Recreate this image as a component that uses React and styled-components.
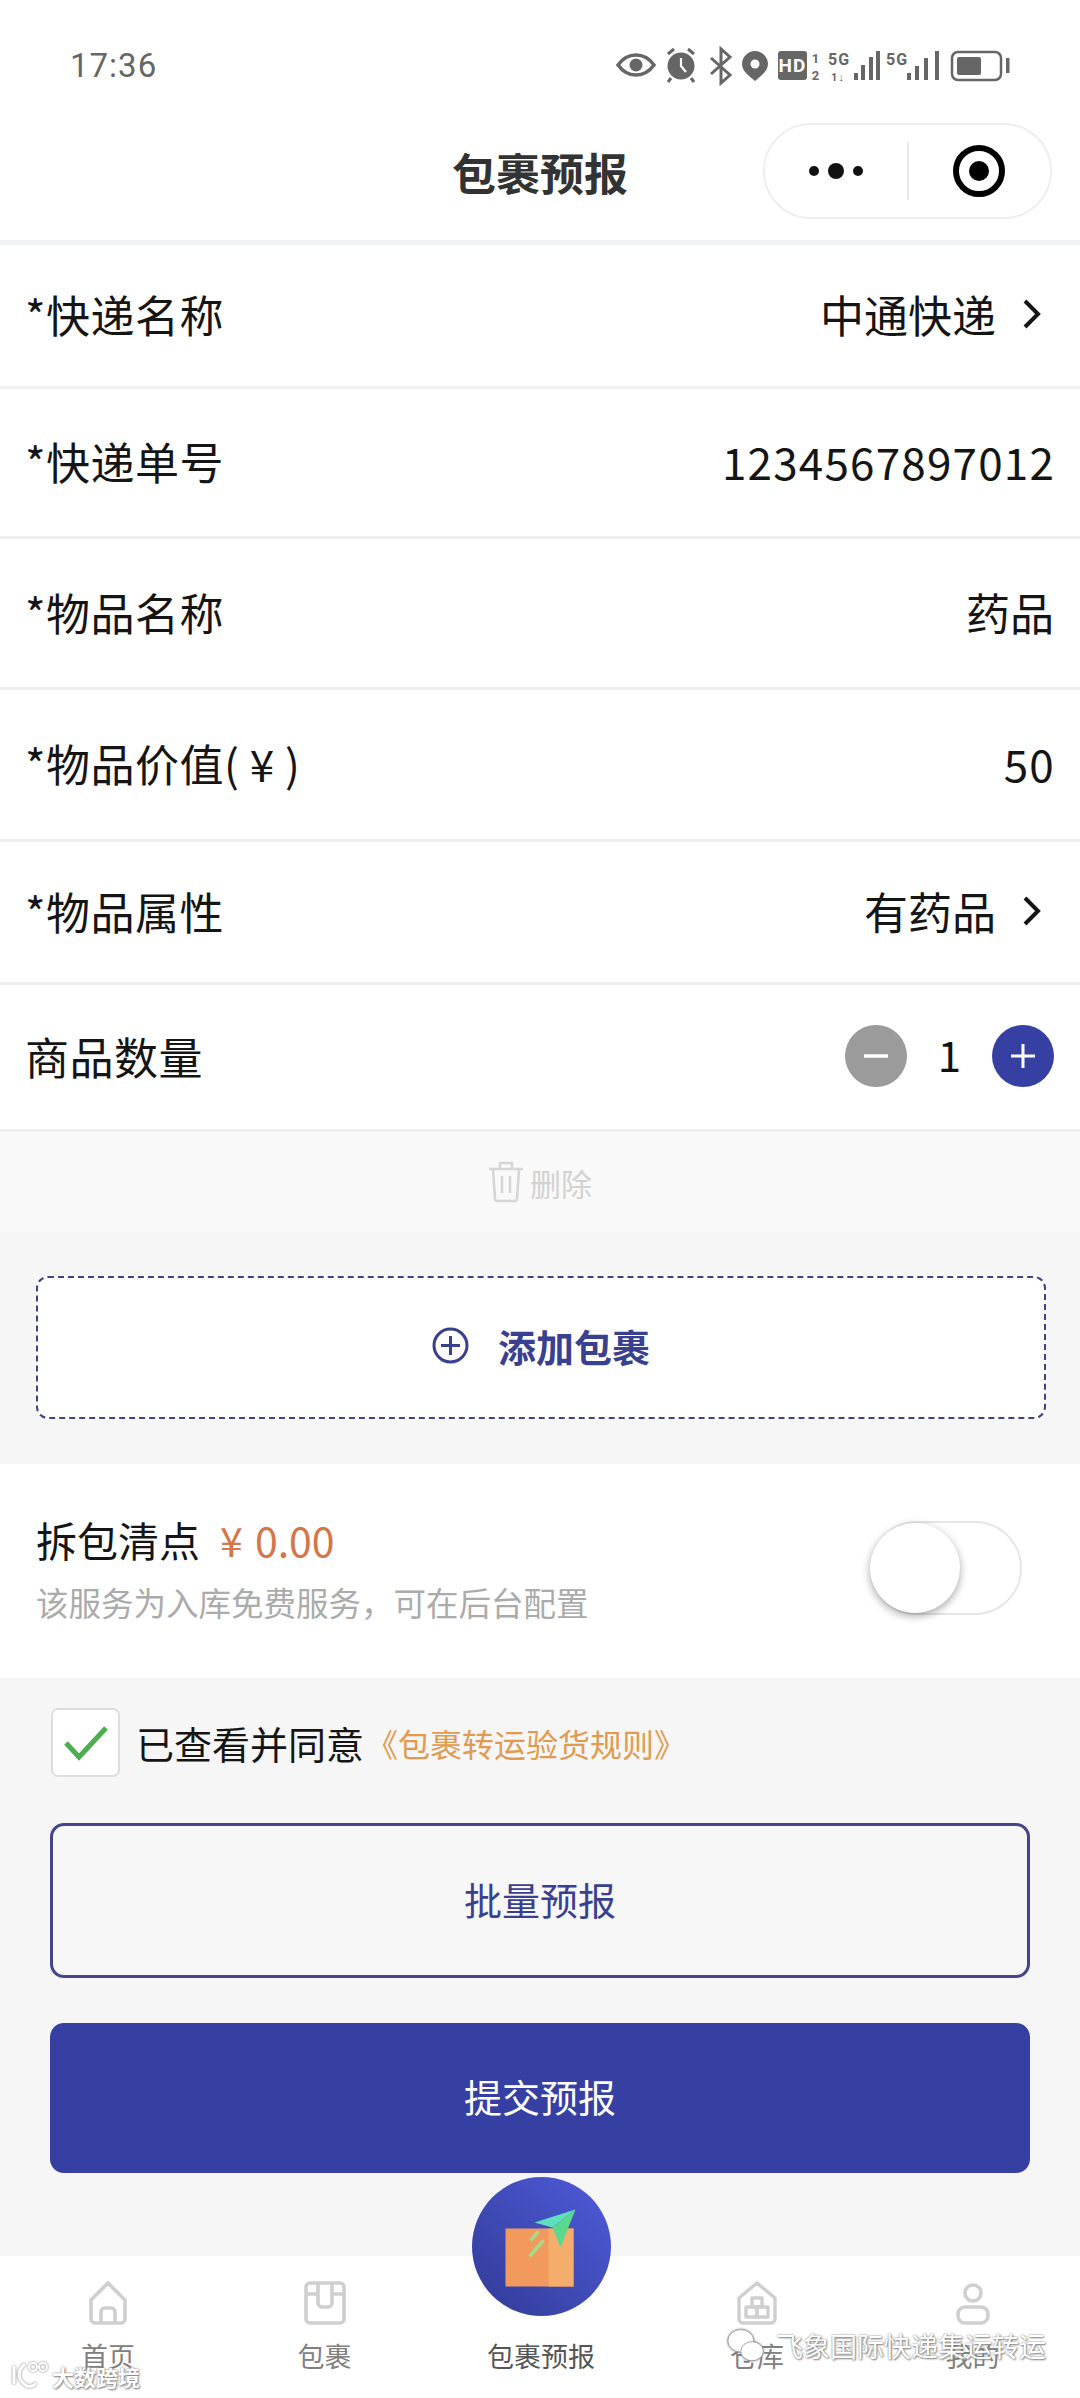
import React from 'react';
import styled, { createGlobalStyle } from 'styled-components';

const GlobalStyle = createGlobalStyle`
  html, body {
    margin: 0;
    padding: 0;
    background: #f6f6f7;
  }
  * {
    box-sizing: border-box;
  }
`;

const FONT = '"Noto Sans CJK SC", "Noto Sans", sans-serif';
const BLUE = '#3640a3';

const Page = styled.div`
  position: relative;
  width: 1080px;
  height: 2398px;
  overflow: hidden;
  background: #f6f6f7;
  font-family: ${FONT};
  color: #111;
`;

const Header = styled.header`
  height: 240px;
  background: #fff;
`;

const StatusBar = styled.div`
  height: 110px;
  padding: 20px 69px 0 70px;
  display: flex;
  justify-content: space-between;
  align-items: center;
  color: #666;
  font-family: Roboto, sans-serif;
  font-size: 33px;
  letter-spacing: 1px;

  svg {
    display: block;
    margin-top: 2px;
  }
`;

const NavBar = styled.div`
  height: 130px;
  display: flex;
  align-items: center;
  justify-content: flex-end;
  position: relative;
  padding: 0 28px 8px 0;
`;

const Title = styled.h1`
  position: absolute;
  left: 0;
  right: 0;
  top: 0;
  margin: 0;
  text-align: center;
  font-size: 44px;
  line-height: 124px;
  font-weight: 700;
  color: #333;
`;

const Capsule = styled.div`
  width: 289px;
  height: 96px;
  border: 2px solid #eeeeee;
  border-radius: 48px;
  display: flex;
  align-items: center;
  background: #fff;
`;

const CapsuleSide = styled.div`
  flex: 1;
  height: 58px;
  display: flex;
  align-items: center;
  justify-content: center;
  border-left: ${props => (props.$divided ? '2px solid #e8e8e8' : 'none')};
`;

const HeaderRule = styled.div`
  height: 5px;
  background: #f1f1f8;
`;

const Row = styled.div`
  height: ${props => props.$height}px;
  padding: 0 26px 3px 25px;
  display: flex;
  align-items: center;
  justify-content: space-between;
  background: #fff;
  border-bottom: 3px solid #efefef;
  font-size: 44px;
`;

const Label = styled.span`
  color: #151515;
  letter-spacing: 0.5px;
`;

const Value = styled.span`
  display: flex;
  align-items: center;
  gap: 26px;
  font-size: 44px;
  color: #151515;
  letter-spacing: ${props => (props.$digits ? '1.2px' : '0')};
  margin-right: ${props => (props.$digits ? '-1px' : '0')};
`;

const Chevron = styled.svg`
  margin-right: 12px;
`;

const Stepper = styled.div`
  display: flex;
  align-items: center;
`;

const StepButton = styled.div`
  width: 62px;
  height: 62px;
  border-radius: 50%;
  background: ${props => props.$color};
  display: flex;
  align-items: center;
  justify-content: center;
`;

const StepCount = styled.span`
  width: 85px;
  text-align: center;
  font-size: 42px;
  margin-top: -4px;
`;

const DeleteBar = styled.div`
  height: 100px;
  background: #f9f9f9;
  display: flex;
  align-items: center;
  justify-content: center;
  gap: 6px;
  font-size: 31px;
  color: #d2d2d2;
`;

const AddSection = styled.div`
  height: 232px;
  padding: 44px 34px 0 36px;
`;

const AddButton = styled.div`
  height: 143px;
  padding-bottom: 4px;
  background: #fff;
  border: 2px dashed #3d4384;
  border-radius: 12px;
  display: flex;
  align-items: center;
  justify-content: center;
  gap: 29px;
  font-size: 38px;
  font-weight: 700;
  color: #3a4090;
`;

const ServiceCard = styled.div`
  height: 214px;
  padding: 0 58px 0 36px;
  background: #fff;
  display: flex;
  align-items: center;
  justify-content: space-between;
`;

const ServiceText = styled.div`
  display: flex;
  flex-direction: column;
  gap: 10px;
  margin-top: -5px;
`;

const ServiceTitle = styled.div`
  display: flex;
  align-items: baseline;
  gap: 20px;
  font-size: 41px;
  line-height: 56px;
  color: #151515;
`;

const Price = styled.span`
  color: #d4754a;
  font-size: 41px;
  word-spacing: 3px;
`;

const ServiceHint = styled.div`
  font-size: 32.5px;
  line-height: 50px;
  color: #ababab;
`;

const Toggle = styled.div`
  position: relative;
  width: 152px;
  height: 94px;
  margin-top: -6px;
  border: 2px solid #e6e6e6;
  border-radius: 47px;
  background: #fff;
`;

const Knob = styled.div`
  position: absolute;
  left: -2px;
  top: 0;
  width: 90px;
  height: 90px;
  border-radius: 50%;
  background: #fff;
  box-shadow: 0 3px 8px rgba(0, 0, 0, 0.35);
`;

const ActionSection = styled.div`
  height: 578px;
  padding: 30px 50px 0;
`;

const AgreeRow = styled.div`
  display: flex;
  align-items: center;
  height: 69px;
  font-size: 38px;
  color: #151515;
  margin-bottom: 46px;
  padding-left: 1px;
`;

const CheckBox = styled.div`
  width: 69px;
  height: 69px;
  margin-right: 16px;
  border: 2px solid #dedede;
  border-radius: 7px;
  background: #fff;
  display: flex;
  align-items: center;
  justify-content: center;
`;

const RuleLink = styled.span`
  margin-left: 2px;
  font-size: 32px;
  color: #e19b50;
`;

const ActionButton = styled.div`
  height: ${props => props.$height}px;
  margin-bottom: 45px;
  padding-bottom: 5px;
  border: 3px solid ${props => (props.$filled ? BLUE : '#43468a')};
  border-radius: 14px;
  background: ${props => (props.$filled ? BLUE : '#f7f7f8')};
  color: ${props => (props.$filled ? '#fff' : '#3a4090')};
  display: flex;
  align-items: center;
  justify-content: center;
  font-size: 38px;
`;

const TabBar = styled.nav`
  height: 142px;
  background: #fff;
  display: grid;
  grid-template-columns: 216px 217px 216px 216px 215px;
`;

const Tab = styled.div`
  display: flex;
  flex-direction: column;
  align-items: center;
  justify-content: flex-end;
  height: 120px;
  font-size: 27px;
  line-height: 40px;
  color: ${props => (props.$active ? '#555' : '#808080')};
`;

const TabIcon = styled.div`
  height: 44px;
  margin-bottom: 11px;
  display: flex;
  align-items: flex-end;
`;

const CenterBadge = styled.div`
  position: absolute;
  left: 472px;
  top: 2177px;
  width: 139px;
  height: 139px;
  border-radius: 50%;
  background: linear-gradient(45deg, #343e9c 10%, #4a57d0 85%);
  display: flex;
  align-items: center;
  justify-content: center;
`;

const Watermark = styled.div`
  position: absolute;
  display: flex;
  align-items: center;
  color: #fff;
  text-shadow: 0 0 2px #777, 1px 1px 2px #888;

  svg {
    filter: drop-shadow(0 0 1px #777);
  }
`;

const LeftMark = styled(Watermark)`
  left: 10px;
  top: 2360px;
  gap: 2px;
  font-size: 22px;
  font-weight: 700;
`;

const RightMark = styled(Watermark)`
  left: 726px;
  top: 2326px;
  gap: 10px;
  font-size: 27px;
`;

const StatusIcons = () => (
  <svg width="400" height="40" viewBox="612 46 400 40">
    <g fill="#666" stroke="none" fontFamily="Roboto, sans-serif" fontWeight="700" textAnchor="middle">
      <path d="M619 65c5-7 10-10 18-10s13 3 18 10c-5 7-10 10-18 10s-13-3-18-10z" fill="none" stroke="#666" strokeWidth="3.5" />
      <circle cx="637" cy="65" r="6.5" />
      <circle cx="682" cy="66" r="13.5" />
      <path d="M669 54l6-5M695 54l-6-5M672 78l-3 4M692 78l3 4" stroke="#666" strokeWidth="3" />
      <path d="M682 58v8l5 6" stroke="#fff" strokeWidth="2.2" fill="none" />
      <path d="M712 58l19 17-9 8V49l9 8-19 17" fill="none" stroke="#666" strokeWidth="3" />
      <path d="M756 51c7 0 13 6 13 13 0 7-7 12-13 17-6-5-13-10-13-17 0-7 6-13 13-13z" />
      <circle cx="756" cy="64" r="4.5" fill="#fff" />
      <rect x="779" y="51" width="29" height="29" rx="3" />
      <text x="793.5" y="72" fill="#fff" fontSize="19">HD</text>
      <text x="817" y="63" fontSize="13">1</text>
      <text x="817" y="80" fontSize="13">2</text>
      <text x="840" y="65" fontSize="16">5G</text>
      <text x="839" y="81" fontSize="11">1↓</text>
      <rect x="855" y="73" width="4" height="7" />
      <rect x="862" y="65" width="4" height="15" />
      <rect x="870" y="57" width="4" height="23" />
      <rect x="877" y="51" width="4" height="29" />
      <text x="898" y="65" fontSize="16">5G</text>
      <rect x="908" y="73" width="4" height="7" />
      <rect x="916" y="66" width="4" height="14" />
      <rect x="925" y="58" width="4" height="22" />
      <rect x="936" y="51" width="4" height="29" />
      <rect x="953" y="52" width="49" height="28" rx="6" fill="none" stroke="#666" strokeWidth="2.5" />
      <rect x="958" y="57" width="24" height="18" rx="2" />
      <rect x="1007" y="58" width="3.5" height="15" />
    </g>
  </svg>
);

const ChevronIcon = () => (
  <Chevron width="20" height="32" viewBox="0 0 20 32">
    <path d="M3 3l13 13L3 29" fill="none" stroke="#151515" strokeWidth="4" />
  </Chevron>
);

const TrashIcon = () => (
  <svg width="36" height="42" viewBox="0 0 36 42" fill="none" stroke="#d6d6d6" strokeWidth="2.6">
    <path d="M1 8h34M12 8V2h12v6M5 8l2 30a2.5 2.5 0 0 0 2.5 2h17a2.5 2.5 0 0 0 2.5-2l2-30M14 15v17M22 15v17" />
  </svg>
);

const HomeIcon = () => (
  <svg width="38" height="44" viewBox="0 0 38 44" fill="none" stroke="#cfcfcf" strokeWidth="3.6" strokeLinejoin="round">
    <path d="M2 19L19 2l17 17v19a4 4 0 0 1-4 4H6a4 4 0 0 1-4-4z" />
    <path d="M12 42V31a4 4 0 0 1 4-4h6a4 4 0 0 1 4 4v11" />
  </svg>
);

const ParcelIcon = () => (
  <svg width="42" height="44" viewBox="0 0 42 44" fill="none" stroke="#cfcfcf" strokeWidth="3.6" strokeLinejoin="round">
    <rect x="2" y="2" width="38" height="40" rx="4" />
    <path d="M2 13h12M28 13h12M14 2v20a4 4 0 0 0 4 4h6a4 4 0 0 0 4-4V2" />
  </svg>
);

const WarehouseIcon = () => (
  <svg width="40" height="44" viewBox="0 0 40 44" fill="none" stroke="#cfcfcf" strokeWidth="3.4" strokeLinejoin="round">
    <path d="M2 17L20 2l18 15v21a4 4 0 0 1-4 4H6a4 4 0 0 1-4-4z" />
    <rect x="15" y="17" width="10" height="9" />
    <rect x="9" y="26" width="11" height="10" />
    <rect x="20" y="26" width="11" height="10" />
  </svg>
);

const PersonIcon = () => (
  <svg width="34" height="42" viewBox="0 0 34 42" fill="none" stroke="#cfcfcf" strokeWidth="3.6">
    <circle cx="17" cy="10" r="8" />
    <path d="M9 24h16a7 7 0 0 1 7 7v2a7 7 0 0 1-7 7H9a7 7 0 0 1-7-7v-2a7 7 0 0 1 7-7z" />
  </svg>
);

const PackagePlaneIcon = () => (
  <svg width="90" height="90" viewBox="0 0 90 90">
    <rect x="8.5" y="26.5" width="68" height="58" fill="#f29a5e" />
    <rect x="51.5" y="26.5" width="25" height="58" fill="#f5ad6c" />
    <path d="M33.5 38.5l8-9M32.5 54.5l14-16" stroke="#a8d988" strokeWidth="3.5" />
    <path d="M78.5 7.5L37.5 20.5l18 5z" fill="#5fe0bc" />
    <path d="M78.5 7.5L55.5 25.5l8 20z" fill="#5ad88f" />
  </svg>
);

const formRows = [
  { label: '*快递名称', value: '中通快递', arrow: true, height: 144 },
  { label: '*快递单号', value: '1234567897012', digits: true, height: 150 },
  { label: '*物品名称', value: '药品', height: 151 },
  { label: '*物品价值( ¥ )', value: '50', digits: true, height: 152 },
  { label: '*物品属性', value: '有药品', arrow: true, height: 143 },
];

const tabs = [
  { label: '首页', icon: <HomeIcon /> },
  { label: '包裹', icon: <ParcelIcon /> },
  { label: '包裹预报', active: true },
  { label: '仓库', icon: <WarehouseIcon /> },
  { label: '我的', icon: <PersonIcon /> },
];

export default function App() {
  return (
    <Page>
      <GlobalStyle />
      <Header>
        <StatusBar>
          <span>17:36</span>
          <StatusIcons />
        </StatusBar>
        <NavBar>
          <Title>包裹预报</Title>
          <Capsule>
            <CapsuleSide>
              <svg width="58" height="20" viewBox="0 0 58 20" fill="#111">
                <circle cx="7" cy="10" r="5" />
                <circle cx="29" cy="10" r="8" />
                <circle cx="51" cy="10" r="5" />
              </svg>
            </CapsuleSide>
            <CapsuleSide $divided>
              <svg width="54" height="54" viewBox="0 0 54 54">
                <circle cx="27" cy="27" r="23" fill="none" stroke="#000" strokeWidth="6" />
                <circle cx="27" cy="27" r="10" fill="#000" />
              </svg>
            </CapsuleSide>
          </Capsule>
        </NavBar>
      </Header>
      <HeaderRule />

      {formRows.map(row => (
        <Row key={row.label} $height={row.height}>
          <Label>{row.label}</Label>
          <Value $digits={row.digits}>
            {row.value}
            {row.arrow && <ChevronIcon />}
          </Value>
        </Row>
      ))}
      <Row $height={147}>
        <Label>商品数量</Label>
        <Stepper>
          <StepButton $color="#9b9b9b">
            <svg width="28" height="28" viewBox="0 0 28 28">
              <path d="M2 14h24" stroke="#fff" strokeWidth="3.5" />
            </svg>
          </StepButton>
          <StepCount>1</StepCount>
          <StepButton $color={BLUE}>
            <svg width="28" height="28" viewBox="0 0 28 28">
              <path d="M2 14h24M14 2v24" stroke="#fff" strokeWidth="3" />
            </svg>
          </StepButton>
        </Stepper>
      </Row>

      <DeleteBar>
        <TrashIcon />
        <span>删除</span>
      </DeleteBar>

      <AddSection>
        <AddButton>
          <svg width="37" height="37" viewBox="0 0 37 37" fill="none" stroke="#3a4090" strokeWidth="3">
            <circle cx="18.5" cy="18.5" r="16.5" />
            <path d="M9 18.5h19M18.5 9v19" />
          </svg>
          <span>添加包裹</span>
        </AddButton>
      </AddSection>

      <ServiceCard>
        <ServiceText>
          <ServiceTitle>
            <span>拆包清点</span>
            <Price>¥ 0.00</Price>
          </ServiceTitle>
          <ServiceHint>{'该服务为入库免费服务\uFF0C可在后台配置'}</ServiceHint>
        </ServiceText>
        <Toggle>
          <Knob />
        </Toggle>
      </ServiceCard>

      <ActionSection>
        <AgreeRow>
          <CheckBox>
            <svg width="46" height="36" viewBox="0 0 46 36" fill="none">
              <path d="M3 18l13 14L43 3" stroke="#4cae4f" strokeWidth="5" />
            </svg>
          </CheckBox>
          <span>已查看并同意</span>
          <RuleLink>《包裹转运验货规则》</RuleLink>
        </AgreeRow>
        <ActionButton $height={155}>批量预报</ActionButton>
        <ActionButton $height={150} $filled>提交预报</ActionButton>
      </ActionSection>

      <TabBar>
        {tabs.map(tab => (
          <Tab key={tab.label} $active={tab.active}>
            {tab.icon && <TabIcon>{tab.icon}</TabIcon>}
            <span>{tab.label}</span>
          </Tab>
        ))}
      </TabBar>

      <CenterBadge>
        <PackagePlaneIcon />
      </CenterBadge>

      <LeftMark>
        <svg width="40" height="32" viewBox="0 0 40 32" fill="none" stroke="#fff" strokeWidth="3">
          <path d="M4 6v18M15 4c-8 6-8 16 2 22 4 1 7 0 9-3" />
          <circle cx="23" cy="7" r="4" strokeWidth="2" />
          <circle cx="33" cy="7" r="4" strokeWidth="2" />
        </svg>
        <span>大数跨境</span>
      </LeftMark>
      <RightMark>
        <svg width="40" height="38" viewBox="0 0 46 44" fill="#fff" stroke="#999" strokeWidth="1">
          <ellipse cx="17" cy="16" rx="15" ry="13" />
          <ellipse cx="30" cy="28" rx="13" ry="11" />
        </svg>
        <span>飞象国际快递集运转运</span>
      </RightMark>
    </Page>
  );
}
